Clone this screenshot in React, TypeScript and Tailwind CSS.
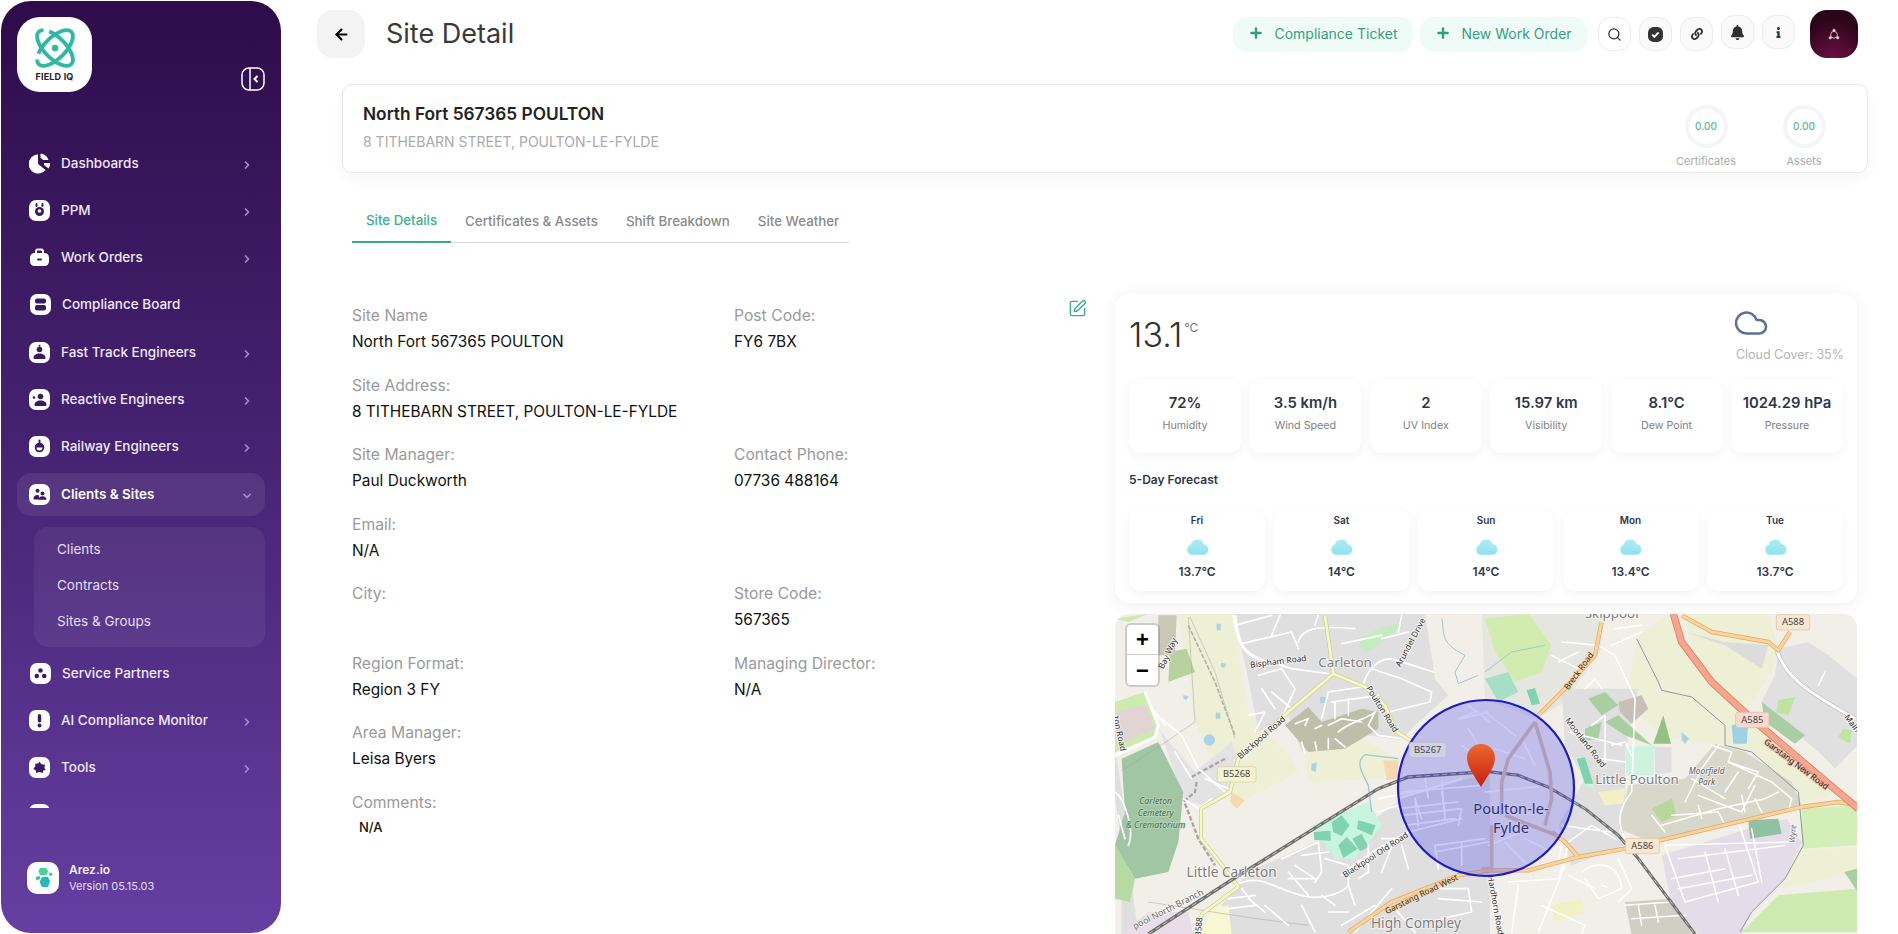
import type { ReactNode } from "react";
import { ChevronRight, ChevronDown, Plus, Search, Cloud, SquarePen, ArrowLeft } from "lucide-react";
import { FaBell, FaInfo, FaLink } from "react-icons/fa";

const Glyph = ({ children }: { children: ReactNode }) => (
  <svg viewBox="0 0 21 21" className="h-[21px] w-[21px] shrink-0">
    <rect x="0" y="0" width="21" height="21" rx="7" fill="#fff" />
    <g fill="#3a1a60">{children}</g>
  </svg>
);

const navIcons: Record<string, ReactNode> = {
  dashboards: (
    <svg viewBox="0 0 21 21" className="h-[21px] w-[21px] shrink-0">
      <path d="M9 1.500a9.500 9.500 0 1 0 7.500 15.500l-5.500-4.500a3 3 0 0 1-2-2.500z" fill="#fff" />
      <path d="M11.500 0.500a9.500 9.500 0 0 1 8 6.500h-5.500a3.500 3.500 0 0 0-2.500-2z" fill="#fff" />
      <path d="M15 10h6v1.500a9 9 0 0 1-1.500 4l-4.500-3.500z" fill="#fff" />
    </svg>
  ),
  ppm: (
    <Glyph>
      <circle cx="10.500" cy="11.500" r="4.500" />
      <rect x="6.500" y="3" width="2" height="4" rx="1" />
      <rect x="12.500" y="3" width="2" height="4" rx="1" />
      <circle cx="10.500" cy="11" r="1.800" fill="#fff" />
    </Glyph>
  ),
  work: (
    <svg viewBox="0 0 21 21" className="h-[21px] w-[21px] shrink-0">
      <path d="M7 6V4.500a2 2 0 0 1 2-2h3a2 2 0 0 1 2 2V6" fill="none" stroke="#fff" strokeWidth="2" />
      <rect x="1" y="6" width="19" height="13" rx="4.500" fill="#fff" />
      <rect x="8" y="11.500" width="5" height="2" rx="1" fill="#3a1a60" />
    </svg>
  ),
  compliance: (
    <Glyph>
      <rect x="5" y="4.500" width="11" height="5" rx="2" />
      <rect x="5" y="11" width="11" height="5.500" rx="2" />
    </Glyph>
  ),
  fast: (
    <Glyph>
      <circle cx="10.500" cy="7.500" r="2.800" />
      <rect x="9.500" y="2.800" width="2" height="2" rx="1" />
      <path d="M4.500 16c0-3 2.500-4.500 6-4.500s6 1.500 6 4.500c0 .5-.5 1-1 1h-10c-.5 0-1-.5-1-1z" />
    </Glyph>
  ),
  reactive: (
    <Glyph>
      <circle cx="11.500" cy="7.500" r="2.800" />
      <circle cx="5" cy="8.500" r="1.300" />
      <path d="M5.500 16c0-3 2.500-4.500 6-4.500s6 1.500 6 4.500c0 .5-.5 1-1 1h-10c-.5 0-1-.5-1-1z" />
    </Glyph>
  ),
  railway: (
    <Glyph>
      <circle cx="10.500" cy="11.500" r="4.800" />
      <rect x="9.500" y="3.500" width="2" height="4" rx="1" />
      <path d="M7.500 11.500a3 3 0 0 0 6 0z" fill="#fff" />
    </Glyph>
  ),
  clients: (
    <Glyph>
      <circle cx="8.500" cy="6.800" r="2" />
      <circle cx="13.500" cy="9.500" r="2" />
      <path d="M4.500 15c0-2.500 1.500-4 4-4 1 0 1.500.5 1.500 1v3.500H5z" />
      <path d="M9.500 15.800c0-2 1.500-3.500 4-3.500s4 1.500 4 3.500z" />
    </Glyph>
  ),
  partners: (
    <Glyph>
      <circle cx="10.500" cy="7.500" r="2.300" />
      <circle cx="6.800" cy="13" r="2.300" />
      <circle cx="14.200" cy="13" r="2.300" />
    </Glyph>
  ),
  ai: (
    <Glyph>
      <rect x="8.800" y="4" width="3.400" height="8.500" rx="1.700" />
      <circle cx="10.500" cy="15.500" r="1.900" />
    </Glyph>
  ),
  tools: (
    <Glyph>
      <path d="M10.500 4.800l2 2.500 3.500.4-.6 3.200 1.300 1.600-2.500 1.200-.4 2.400-3.300-1-3.300 1-.4-2.700-2.400-1.700 2-2.500-.3-2.500 3-.3z" />
    </Glyph>
  ),
  blank: <Glyph>{null}</Glyph>,
};

const NavItem = ({
  icon,
  label,
  chevron = true,
  indent = false,
}: {
  icon: string;
  label: string;
  chevron?: boolean;
  indent?: boolean;
}) => (
  <div className={`flex h-[47px] shrink-0 items-center ${indent ? "pl-[29px]" : "pl-[28px]"} pr-[28px]`}>
    {navIcons[icon]}
    <span className="ml-[11px] text-[13.500px] font-medium text-[#efe8f7]">{label}</span>
    {chevron && <ChevronRight size={12} strokeWidth={3.500} className="ml-auto mt-[3px] text-[#a48ccb]" />}
  </div>
);

const Sidebar = () => (
  <aside className="relative ml-px mt-px flex h-[932px] w-[280px] shrink-0 flex-col rounded-[30px] bg-gradient-to-b from-[#2e0c4a] via-[#472474] to-[#653fa2]">
    <div className="flex h-[138.500px] shrink-0 items-start justify-between pl-[16px] pr-[16px] pt-[16px]">
      <div className="flex h-[75px] w-[75px] flex-col items-center rounded-[23px] bg-white pt-[8px]">
        <svg viewBox="0 0 48 48" className="h-[46px] w-[46px]" fill="none" stroke="#2fb9a5" strokeWidth="4">
          <ellipse cx="24" cy="24" rx="24" ry="11" transform="rotate(45 24 24)" strokeDasharray="62 6" />
          <ellipse cx="24" cy="24" rx="24" ry="11" transform="rotate(-45 24 24)" strokeDasharray="62 6" />
          <circle cx="24" cy="24" r="3.500" fill="#2fb9a5" stroke="none" />
        </svg>
        <span className="mt-[1px] text-[9px] font-bold leading-[10px] tracking-[0.2px] text-[#222]">FIELD IQ</span>
      </div>
      <svg viewBox="0 0 24 24" className="mt-[50px] h-[24px] w-[24px]" fill="none" stroke="#fff" strokeWidth="1.500">
        <rect x="1" y="1" width="22" height="22" rx="7" />
        <path d="M9 1v22" />
        <path d="M16.500 9l-3 3 3 3" strokeWidth="2" />
      </svg>
    </div>
    <nav className="flex h-[668px] shrink-0 flex-col overflow-hidden">
      <NavItem icon="dashboards" label="Dashboards" />
      <NavItem icon="ppm" label="PPM" />
      <NavItem icon="work" label="Work Orders" />
      <div className="mt-[0.500px]" />
      <NavItem icon="compliance" label="Compliance Board" chevron={false} indent />
      <div className="mt-[1px]" />
      <NavItem icon="fast" label="Fast Track Engineers" />
      <NavItem icon="reactive" label="Reactive Engineers" />
      <NavItem icon="railway" label="Railway Engineers" />
      <div className="mx-[16px] mt-[2.500px] flex h-[43px] shrink-0 items-center rounded-[14px] bg-[#ffffff14] pl-[12px] pr-[12px]">
        {navIcons.clients}
        <span className="ml-[11px] text-[13.500px] font-semibold text-white">Clients &amp; Sites</span>
        <ChevronDown size={12} strokeWidth={3.500} className="ml-auto mt-[3px] text-[#a48ccb]" />
      </div>
      <div className="ml-[33px] mr-[16px] mt-[11px] shrink-0 rounded-[14px] bg-[#ffffff0f] pb-[7px] pl-[23px] pt-[5px]">
        {["Clients", "Contracts", "Sites & Groups"].map((s) => (
          <div key={s} className="flex h-[36px] items-center text-[13.500px] text-[#e6def0]">
            {s}
          </div>
        ))}
      </div>
      <div className="mt-[3.500px]" />
      <NavItem icon="partners" label="Service Partners" chevron={false} indent />
      <NavItem icon="ai" label="AI Compliance Monitor" />
      <NavItem icon="tools" label="Tools" />
      <NavItem icon="blank" label="" chevron={false} />
    </nav>
    <div className="mt-[54px] flex items-center pl-[26px]">
      <div className="flex h-[32px] w-[32px] items-center justify-center rounded-[10px] bg-white">
        <svg viewBox="0 0 24 24" className="h-[24px] w-[24px]">
          <path d="M9 2h6l2 3-1 4H9L7.500 5z" fill="#46d39a" />
          <path d="M18 6.500l3.500.5-.5 3-3-.5z" fill="#3fcfa8" />
          <path d="M4.500 11l4-1 1 2.500-4 2z" fill="#2fc4b0" />
          <path d="M11 11h6l2 4-2 6H11l-2.500-5z" fill="#1fbcb2" />
        </svg>
      </div>
      <div className="ml-[10px]">
        <div className="text-[12px] font-semibold leading-[16px] text-[#f3eef8]">Arez.io</div>
        <div className="text-[11px] leading-[16px] text-[#e6def0]">Version 05.15.03</div>
      </div>
    </div>
  </aside>
);

const IconBtn = ({ children, white = false, up = false }: { children: ReactNode; white?: boolean; up?: boolean }) => (
  <button
    className={`flex h-[34px] w-[33px] items-center justify-center rounded-[13px] border border-[#ececec] ${
      white ? "bg-white" : "bg-[#fafafa]"
    } ${up ? "-mt-[2px]" : ""} text-[#2f2f2f]`}
  >
    {children}
  </button>
);

const ActionBtn = ({ label, width }: { label: string; width: string }) => (
  <button className={`flex h-[35px] items-center justify-center gap-[10px] rounded-[14px] bg-[#effbf6] pb-[3px] text-[14px] text-[#3a9d80] ${width}`}>
    <Plus size={16} strokeWidth={3.500} className="text-[#2f9e7f]" />
    {label}
  </button>
);

const Header = () => (
  <header className="flex h-[58px] items-start pr-[40px] pt-[10px]">
    <button className="flex h-[48px] w-[48px] items-center justify-center rounded-[16px] bg-[#f3f3f3] text-black">
      <ArrowLeft size={17} strokeWidth={3} />
    </button>
    <h1 className="ml-[21px] mt-[8px] text-[27px] font-normal leading-[32px] text-[#3a3a3a]">Site Detail</h1>
    <div className="ml-auto flex items-start pt-[7px]">
      <ActionBtn label="Compliance Ticket" width="w-[180px]" />
      <div className="w-[7px]" />
      <ActionBtn label="New Work Order" width="w-[167px]" />
      <div className="flex items-start gap-[8px] pl-[11px]">
        <IconBtn white>
          <Search size={15} />
        </IconBtn>
        <IconBtn>
          <svg viewBox="0 0 16 16" className="h-[15px] w-[15px]">
            <rect width="16" height="16" rx="6" fill="#333" />
            <path d="M4.500 8.200l2.300 2.300 4.500-4.800" fill="none" stroke="#fff" strokeWidth="2" />
          </svg>
        </IconBtn>
        <IconBtn>
          <FaLink size={12} />
        </IconBtn>
        <IconBtn up>
          <FaBell size={15} />
        </IconBtn>
        <IconBtn up>
          <FaInfo size={11} className="text-[#22404f]" />
        </IconBtn>
      </div>
    </div>
    <div className="ml-[15px] flex h-[48px] w-[48px] items-center justify-center rounded-[17px] bg-[radial-gradient(circle_at_50%_100%,#6b0f45,#2b0519_72%)]">
      <svg viewBox="0 0 16 16" className="h-[12px] w-[12px]" fill="none" stroke="#e9c9d8" strokeWidth="1.200">
        <circle cx="8" cy="9" r="4.500" />
        <circle cx="8" cy="3" r="1.500" fill="#e9c9d8" />
        <circle cx="3" cy="13" r="1.500" fill="#e9c9d8" />
        <circle cx="13" cy="13" r="1.500" fill="#e9c9d8" />
      </svg>
    </div>
  </header>
);

const Stat = ({ label }: { label: string }) => (
  <div className="flex w-[98px] flex-col items-center">
    <div className="flex h-[43px] w-[43px] items-center justify-center rounded-full border-[4px] border-[#f4f6f5] text-[10px] font-medium text-[#5cb89a]">
      0.00
    </div>
    <div className="mt-[6px] text-[11px] leading-[14px] text-[#aaaaaa]">{label}</div>
  </div>
);

const SiteCard = () => (
  <section className="ml-[25px] mt-[26px] flex h-[89px] w-[1526px] items-start justify-between rounded-[10px] border border-[#e8e8e8] bg-white pl-[20px] pr-[14px] shadow-[0_6px_14px_rgba(0,0,0,0.04)]">
    <div className="pt-[18px]">
      <div className="text-[17.300px] font-semibold leading-[22px] text-[#222]">North Fort 567365 POULTON</div>
      <div className="mt-[7px] text-[14px] leading-[20px] text-[#aaaaaa]">8 TITHEBARN STREET, POULTON-LE-FYLDE</div>
    </div>
    <div className="flex pt-[20px]">
      <Stat label="Certificates" />
      <Stat label="Assets" />
    </div>
  </section>
);

const tabs = ["Site Details", "Certificates & Assets", "Shift Breakdown", "Site Weather"];

const Tabs = () => (
  <div className="ml-[35px] mt-[27px] flex h-[43px] w-[497px] border-b border-[#d9d9d9]">
    {tabs.map((t, i) => (
      <div
        key={t}
        className={`-mb-px flex h-[43px] shrink-0 items-center whitespace-nowrap px-[14px] text-[13.300px] font-medium ${
          i === 0 ? "border-b-2 border-[#3aa886] text-[#3eaf8d]" : "text-[#8a8a8a]"
        }`}
      >
        {t}
      </div>
    ))}
  </div>
);

const Field = ({ label, value, small = false }: { label: string; value?: string; small?: boolean }) => (
  <div>
    <div className="text-[15.700px] leading-[24px] text-[#9a9a9a]">{label}</div>
    {value &&
      (small ? (
        <div className="ml-[7px] mt-[2px] text-[13px] font-medium leading-[20px] text-[#111]">{value}</div>
      ) : (
        <div className="mt-[4px] text-[15.400px] leading-[20px] text-[#111]">{value}</div>
      ))}
  </div>
);

const Details = () => (
  <div className="flex w-[798px] shrink-0 pl-[35px] pt-[61px]">
    <div className="grid w-[716px] auto-rows-[69.500px] grid-cols-[382px_1fr]">
      <Field label="Site Name" value="North Fort 567365 POULTON" />
      <Field label="Post Code:" value="FY6 7BX" />
      <div className="col-span-2">
        <Field label="Site Address:" value="8 TITHEBARN STREET, POULTON-LE-FYLDE" />
      </div>
      <Field label="Site Manager:" value="Paul Duckworth" />
      <Field label="Contact Phone:" value="07736 488164" />
      <div className="col-span-2">
        <Field label="Email:" value="N/A" />
      </div>
      <Field label="City:" />
      <Field label="Store Code:" value="567365" />
      <Field label="Region Format:" value="Region 3 FY" />
      <Field label="Managing Director:" value="N/A" />
      <div className="col-span-2">
        <Field label="Area Manager:" value="Leisa Byers" />
      </div>
      <Field label="Comments:" value="N/A" small />
    </div>
    <SquarePen size={19} strokeWidth={1.800} className="-mt-[5px] text-[#3aaf8f]" />
  </div>
);

const metrics = [
  ["72%", "Humidity"],
  ["3.5 km/h", "Wind Speed"],
  ["2", "UV Index"],
  ["15.97 km", "Visibility"],
  ["8.1°C", "Dew Point"],
  ["1024.29 hPa", "Pressure"],
];

const forecast = [
  ["Fri", "13.7°C"],
  ["Sat", "14°C"],
  ["Sun", "14°C"],
  ["Mon", "13.4°C"],
  ["Tue", "13.7°C"],
];

const Weather = () => (
  <section className="h-[309px] rounded-[14px] bg-white px-[14px] shadow-[0_2px_16px_rgba(0,0,0,0.07)]">
    <div className="flex h-[86px] items-start justify-between">
      <div className="mt-[24px] flex items-start">
        <span className="text-[34px] font-light leading-[34px] text-[#333]">13.1</span>
        <span className="ml-[2px] mt-[3px] text-[12px] leading-[14px] text-[#777]">°C</span>
      </div>
      <div className="mr-[-1px] mt-[11px]">
        <Cloud size={36} strokeWidth={1.700} className="-ml-[3px] text-[#5b7099]" />
        <div className="mt-[5px] text-[12.500px] leading-[18px] text-[#b5b5b5]">Cloud Cover: 35%</div>
      </div>
    </div>
    <div className="flex justify-between">
      {metrics.map(([v, l]) => (
        <div key={l} className="flex h-[73px] w-[112px] flex-col items-center rounded-[12px] bg-white pt-[14px] shadow-[0_3px_10px_rgba(0,0,0,0.05)]">
          <div className="text-[14.800px] font-semibold leading-[18px] text-[#2d3748]">{v}</div>
          <div className="mt-[7px] text-[10.700px] leading-[14px] text-[#808080]">{l}</div>
        </div>
      ))}
    </div>
    <div className="mt-[19px] text-[12px] font-semibold leading-[16px] text-[#2d3748]">5-Day Forecast</div>
    <div className="mt-[21px] flex justify-between">
      {forecast.map(([d, t]) => (
        <div key={d} className="flex h-[82px] w-[136px] flex-col items-center rounded-[12px] bg-white pt-[5px] shadow-[0_3px_10px_rgba(0,0,0,0.05)]">
          <div className="text-[10px] font-semibold leading-[12px] text-[#2d3748]">{d}</div>
          <svg viewBox="0 0 22 16" className="mt-[12px] h-[17px] w-[23px]">
            <defs>
              <linearGradient id="drop" x1="0" y1="0" x2="0" y2="1">
                <stop offset="0" stopColor="#a9edf4" />
                <stop offset="1" stopColor="#8fe3ee" />
              </linearGradient>
            </defs>
            <path d="M6 16a5 5 0 0 1-1.500-9.700A6.500 6.500 0 0 1 17 5.800 5.200 5.200 0 0 1 17 16z" fill="url(#drop)" />
          </svg>
          <div className="mt-[9px] text-[12px] font-semibold leading-[16px] text-[#2d3748]">{t}</div>
        </div>
      ))}
    </div>
  </section>
);

const Label = ({
  x,
  y,
  size = 25,
  rot = 0,
  color = "#2a2a2a",
  italic = false,
  halo = "#ffffff",
  children,
}: {
  x: number;
  y: number;
  size?: number;
  rot?: number;
  color?: string;
  italic?: boolean;
  halo?: string;
  children: string;
}) => (
  <text
    x={x}
    y={y}
    fontSize={size}
    fill={color}
    fontFamily="'Noto Sans', sans-serif"
    fontStyle={italic ? "italic" : "normal"}
    textAnchor="middle"
    dominantBaseline="middle"
    stroke={halo}
    strokeOpacity={0.75}
    strokeWidth={5}
    paintOrder="stroke"
    transform={rot ? `rotate(${rot} ${x} ${y})` : undefined}
  >
    {children}
  </text>
);

const Shield = ({ x, y, w = 116, fill, stroke, children }: { x: number; y: number; w?: number; fill: string; stroke: string; children: string }) => (
  <g>
    <rect x={x - w / 2} y={y - 23} width={w} height={46} rx={7} fill={fill} stroke={stroke} strokeWidth={2} />
    <text x={x} y={y + 1} fontSize={28} fill="#444" fontFamily="'Noto Sans', sans-serif" textAnchor="middle" dominantBaseline="middle">
      {children}
    </text>
  </g>
);

// street lines, in the coordinates of a 3x crop of each half of the map
const leftStreets = [
  "M355 10C370 110 395 125 430 140L530 170L640 185",
  "M360 40L470 10M380 95L530 60M470 70L495 10M530 60L550 110M550 90C560 50 600 40 720 50M600 40L610 10M680 95L800 70",
  "M745 215C760 170 790 140 830 140L955 180M770 170L860 200L950 240L945 270L820 300M800 80L880 60M850 60L860 10",
  "M430 190L500 170L540 230L500 320M440 230L480 290M400 310L450 300L420 360M470 240L530 290",
  "M640 240L740 225M650 270L790 250M620 320L640 240M660 270L660 320M700 260L700 310",
  "M540 335L580 320L570 340M600 350L620 340M640 340L680 320L740 330M560 390L570 425M600 390L605 415M640 380L640 410M660 380L690 405M670 360C700 330 760 320 780 300L760 340L790 370L860 380",
  "M360 820C440 780 470 830 560 850C600 865 680 850 700 820L720 880M400 860L450 900M380 830L420 880L340 890M340 860L420 850",
  "M680 790C700 770 760 720 880 660L1000 630L1040 620",
  "M500 740L610 690L620 780L600 810M540 760L600 800L520 800M630 740L700 760L700 820M760 700L760 780L730 800M800 680L840 680L800 780M860 700L880 770",
  "M720 960L830 830M840 890L900 960M960 830L1060 830L1070 900L980 920M970 860L1100 870",
  "M0 430L120 375L130 340L90 240M140 320L200 370L250 470L330 540M150 340L120 300M180 420L230 500",
  "M0 540C30 560 60 660 40 700M10 610L30 680M205 560L250 590L290 560M270 500L340 530",
  "M790 560L890 540M790 600L850 580M850 560L1040 500M860 610L1040 590L1030 640M900 560L920 620M980 540L990 600M1060 350L1090 400M1040 320L1120 300M960 720L1120 690",
  "M860 540L1100 520M850 590L1030 570M870 640L1020 620M930 500L940 560M980 510L990 620M900 560L910 640M1040 400L1125 460M1060 280L1125 330M1030 320L1080 300M960 700L1110 680M960 700L970 770M1040 690L1040 760",
  "M560 730L640 720M520 780L580 850M620 850L660 880M450 880L520 940M560 880L600 960M640 900L700 900M680 940L780 880",
];

const rightStreets = [
  "M0 540L200 520M230 90L340 100L390 130L450 260L440 540C400 590 395 630 420 680M380 100L470 60M390 50L470 40",
  "M200 130L280 170M220 150L280 120M250 360L410 400M300 230L330 200L350 230M320 340L360 310L360 450M380 400L420 390L440 430M350 440L420 450",
  "M230 640L300 650L380 660M250 690L320 640L390 680M220 750L230 700M70 810L220 800L250 700M290 780C320 750 400 740 410 830L340 860L300 800M350 820L365 825",
  "M400 740L440 830L400 870M250 790L330 830M100 820L80 960M160 960L240 760M170 880L300 940L290 966",
  "M680 400L740 420L730 450L860 510L920 560L910 600M700 400L650 470L600 570M730 450L820 480L790 530M620 500L720 560M760 480L720 540M640 550L770 600L810 520",
  "M530 640L700 590L840 560L880 540M560 610L700 600L720 640M500 610L540 660M640 580L650 620M770 550L780 600M810 560L830 600",
  "M540 700L910 690M580 740L900 700M600 870L820 810L760 630M660 720L700 870M720 710L760 850M800 650L830 810M540 700L600 870M560 800L720 770M580 830L800 790",
  "M420 880L560 870M440 920L600 910M460 880L470 940M510 880L520 930",
  "M875 115C900 190 950 230 1110 320M1020 180L1000 220",
  "M0 300L90 370M30 410L120 440M110 380L150 460M10 700L110 660M60 690L130 760M120 680L200 720",
];

const MapPane = () => (
  <div className="relative mt-[11px] h-[320px] overflow-hidden rounded-t-[14px] bg-[#f2efe9]">
    <svg viewBox="0 0 742 320" className="block h-[320px] w-[742px]">
      <g transform="translate(0,-2) scale(0.33333)">
        <path d="M190 5H350L400 300L520 430L550 480L380 570L300 480L240 330z" fill="#eef0d5" />
        <path d="M560 400L740 380L850 440L800 500L580 510z" fill="#eef0d5" />
        <path d="M355 5H930L960 200L1000 250L900 340L860 385L760 370L560 420L520 310L430 360L400 200z" fill="#dfdfdf" />
        <path d="M400 780L600 690L780 620L860 560L1125 480V966H340L320 880z" fill="#dfdfdf" />
        <path d="M90 240L130 350L240 480L350 390L370 450L330 560L260 580L205 560L130 340z" fill="#e4e3e3" />
        <path d="M0 410V560L20 700V966H70L50 820L20 700L30 600z" fill="#dfdfdf" />
        <path d="M0 270L60 250L90 240L130 340L120 375L0 420z" fill="#cdebb0" />
        <path d="M0 300L90 280L120 350L30 390L0 380z" fill="#e2d4d4" />
        <path d="M20 440L130 390L205 540L190 690L160 780L60 800L0 700L30 600z" fill="#a0c6a3" />
        <path d="M0 700L60 800L45 870L0 860z" fill="#b7d9a2" />
        <path d="M165 120L215 110L240 180L160 210z" fill="#b7d29c" />
        <path d="M130 10H185L180 130H130z" fill="#c8c8b4" />
        <path d="M0 20L100 5L40 30z" fill="#cdebb0" />
        <path d="M20 966L100 900L220 900L235 966z" fill="#e8dde8" />
        <path d="M290 890L340 880L350 966H260z" fill="#f7f7d0" />
        <path d="M510 340L580 285L620 330L740 290L790 300L790 350L690 410L580 420z" fill="#bdbfa8" />
        <path d="M590 640L760 570L800 640L720 740L660 740z" fill="#c8f5df" />
        <path d="M596 660L646 656L648 686L598 684zM650 630L680 610L704 640L680 672L655 660zM730 625L782 640L770 670L726 650zM670 700L695 675L728 710L685 738zM712 680L740 665L760 705L735 718z" fill="#7fd3ae" />
        <path d="M730 80L790 50L870 30L800 90L750 125z" fill="#c5ecc0" />
        <path d="M350 540L390 565L365 590L345 570zM805 445H850V500L815 505z" fill="#f6d9ae" />
        <circle cx="283" cy="384" r="17" fill="#a8d4e8" />
        <path d="M305 35h12v20h-12zM318 152l16 4-6 12-10-4zM205 250l16 2-6 12-10-4zM302 302h14v18h-14zM590 455l16-4-4 28-14-4zM615 255h20v18h-20z" fill="#a8d4e8" />
        <path d="M750 428C720 450 740 480 760 520L770 600M750 428L850 440" fill="none" stroke="#9dc6d4" strokeWidth="4" />
        <path d="M980 20C990 60 970 90 1050 130L1020 180L1030 215L1090 190" fill="none" stroke="#9dc6d4" strokeWidth="3" />
        <path d="M220 15L240 330L145 395L20 475M225 15L300 180L360 380M100 870L410 918L580 940" fill="none" stroke="#a2a2a2" strokeWidth="1.500" />
        <path d="M230 495L330 440M245 510L240 540L205 570M210 575L250 680L300 760" fill="none" stroke="#aaa3a8" strokeWidth="7" strokeDasharray="14 6" />
        <path d="M220 40L300 210L360 370" fill="none" stroke="#b6b0a8" strokeWidth="5" strokeDasharray="14 5" />
        <g fill="none" stroke="#fff" strokeWidth="5" strokeLinecap="round" strokeLinejoin="round">
          {leftStreets.map((d) => (
            <path key={d} d={d} />
          ))}
        </g>
        <path d="M360 10C370 110 395 125 430 140" fill="none" stroke="#fff" strokeWidth="9" />
        <path d="M0 430L120 375L130 340L90 240" fill="none" stroke="#fff" strokeWidth="9" />
        <path d="M700 960L830 870L1030 790L1125 775" fill="none" stroke="#dea968" strokeWidth="13" />
        <path d="M700 960L830 870L1030 790L1125 775" fill="none" stroke="#fad29a" strokeWidth="9" />
        <g fill="none" strokeLinejoin="round">
          <path d="M240 966L262 905L370 825L330 770L258 680L258 590L345 540L370 440L520 300L655 185L750 225L810 280L845 360L895 390M630 10L655 185" stroke="#c9cb96" strokeWidth="12" />
          <path d="M240 966L262 905L370 825L330 770L258 680L258 590L345 540L370 440L520 300L655 185L750 225L810 280L845 360L895 390M630 10L655 185" stroke="#f7fabf" strokeWidth="8" />
        </g>
        <path d="M100 966L340 810L790 530L880 495L1125 478" fill="none" stroke="#6f6f6f" strokeWidth="10" />
        <path d="M100 966L340 810L790 530L880 495L1125 478" fill="none" stroke="#d9d9d9" strokeWidth="2.500" strokeDasharray="16 10" />
        <Label x={690} y={155} size={40} color="#7c7c7c">Carleton</Label>
        <Label x={350} y={785} size={41} color="#7c7c7c">Little Carleton</Label>
        <Label x={903} y={938} size={41} color="#7c7c7c">High Compley</Label>
        <Label x={490} y={150} rot={-7}>Bispham Road</Label>
        <Label x={888} y={92} rot={-62}>Arundel Drive</Label>
        <Label x={800} y={292} rot={58}>Poulton Road</Label>
        <Label x={440} y={378} rot={-41}>Blackpool Road</Label>
        <Label x={782} y={730} rot={-33}>Blackpool Old Road</Label>
        <Label x={920} y={848} rot={-26} halo="#fad29a">Garstang Road West</Label>
        <Label x={122} y={568} size={26} italic color="#3d6b50" halo="#c4dcc4">Carleton</Label>
        <Label x={122} y={604} size={26} italic color="#3d6b50" halo="#c4dcc4">Cemetery</Label>
        <Label x={122} y={640} size={26} italic color="#3d6b50" halo="#c4dcc4">&amp; Crematorium</Label>
        <Label x={160} y={125} rot={-65}>Bay Way</Label>
        <Label x={12} y={365} rot={78}>ton Road</Label>
        <Label x={160} y={893} size={27} rot={-27} color="#666">pool North Branch</Label>
        <Label x={253} y={945} rot={-85}>B588</Label>
        <Shield x={365} y={487} fill="#f6f3cf" stroke="#cfcca6">B5268</Shield>
      </g>
      <g transform="translate(370,-2) scale(0.33333)">
        <path d="M-10 5H340L350 110L240 270L150 320L0 260z" fill="#e6e6e0" />
        <path d="M0 20L130 5L200 100L170 180L90 210L30 120z" fill="#d2ecb0" />
        <path d="M0 200L70 180L100 240L40 270z" fill="#a5dfc4" />
        <path d="M125 235L150 228L165 275L140 280z" fill="#7fd3ae" />
        <path d="M460 70L555 5L600 100L700 220L820 330L1060 540L950 585L930 530L800 420L720 400L560 380L520 360L420 270z" fill="#eef0d5" />
        <path d="M880 110L970 90L1030 130L1118 200V400L1050 470L1000 420L830 270L870 190z" fill="#e0e0e0" />
        <path d="M830 270L960 370L930 395L840 330z" fill="#a8cfa4" />
        <path d="M590 5H850L880 110L860 180L780 300L640 170z" fill="#eef0d5" />
        <path d="M600 60L720 90L850 100L830 170L720 100z" fill="#dcdcdc" />
        <path d="M740 340L790 330L785 395L745 395z" fill="#9cd2e6" />
        <path d="M590 360L612 380L600 395L590 385z" fill="#a8d4e8" />
        <path d="M1075 350L1100 355L1095 395L1060 375zM880 265L930 255L910 310L875 300z" fill="#c0e3a0" />
        <path d="M230 230H460L420 420V560L400 650L420 700L260 760L220 640L300 500L240 400z" fill="#dfdfdf" />
        <path d="M310 260L360 240L400 280L350 310zM300 350L350 330L340 380L300 385zM360 330L400 310L500 400L420 370z" fill="#a8cfa0" />
        <path d="M400 270L470 250L490 290L440 335L405 300z" fill="#c9bfb6" />
        <path d="M505 395L535 310L558 395z" fill="#93c283" />
        <path d="M420 405L510 400L505 490L425 490zM270 435L300 435L330 530L300 520z" fill="#cdf3df" />
        <path d="M510 405H560V480L510 490z" fill="#dfdfdf" />
        <path d="M275 440L300 436L325 515L300 515z" fill="#7fd3ae" />
        <path d="M340 540L420 530L415 575L360 580z" fill="#f3f1c4" />
        <path d="M430 520L600 500L690 395L780 420L920 510L950 580L780 620L500 690L400 650z" fill="#d7d7ca" />
        <path d="M500 590L560 560L575 610L530 630z" fill="#b7d89a" />
        <path d="M530 730L790 650L905 620L950 690L900 800L800 900L770 966H640L560 880z" fill="#e4dce8" />
        <path d="M790 625L880 620L890 665L795 680z" fill="#8fc2a0" />
        <path d="M950 590L1118 580V700L950 710z" fill="#d4eeb8" />
        <path d="M940 715L1118 705V780L890 830z" fill="#eef0d5" />
        <path d="M770 960L880 850L1118 830V960z" fill="#cdebb0" />
        <path d="M1078 780L1118 770V840z" fill="#a8cfa0" />
        <path d="M420 870L560 860L620 966H440z" fill="#cfcfc4" />
        <path d="M200 880L290 860L300 900L210 930z" fill="#f3f1c4" />
        <path d="M455 80L520 210L530 235L620 255L720 340L720 400L800 420L940 540L955 700L900 800L800 900L765 960" fill="none" stroke="#8c97a6" strokeWidth="3" />
        <path d="M0 180L80 120L180 100" fill="none" stroke="#9dc6d4" strokeWidth="3" />
        <g fill="none" stroke="#fff" strokeWidth="4.500" strokeLinecap="round" strokeLinejoin="round">
          {rightStreets.map((d) => (
            <path key={d} d={d} />
          ))}
        </g>
        <path d="M875 115C900 190 950 230 1110 320" fill="none" stroke="#bbb" strokeWidth="13" />
        <path d="M875 115C900 190 950 230 1110 320" fill="none" stroke="#fff" strokeWidth="9" />
        <g fill="none" strokeLinejoin="round" stroke="#dea968" strokeWidth="13">
          <path d="M-10 775H130L280 735L420 710L800 620L950 585L1060 570L1118 580" />
          <path d="M160 310L230 240L330 130L350 30M280 735L240 690L200 660M590 10L680 60L850 90L880 115L915 60" />
        </g>
        <g fill="none" strokeLinejoin="round" stroke="#fad29a" strokeWidth="9">
          <path d="M-10 775H130L280 735L420 710L800 620L950 585L1060 570L1118 580" />
          <path d="M160 310L230 240L330 130L350 30M280 735L240 690L200 660M590 10L680 60L850 90L880 115L915 60" />
        </g>
        <path d="M565 5L590 90L680 210L800 320L1060 540L1120 590" fill="none" stroke="#d87f63" strokeWidth="22" />
        <path d="M565 5L590 90L680 210L800 320L1060 540L1120 590" fill="none" stroke="#f7a58c" strokeWidth="17" />
        <path d="M0 478L100 490L190 525L300 590L400 670L460 740L630 966" fill="none" stroke="#6f6f6f" strokeWidth="9" />
        <path d="M0 478L100 490L190 525L300 590L400 670L460 740L630 966" fill="none" stroke="#d9d9d9" strokeWidth="2.500" strokeDasharray="16 10" />
        <path d="M150 330L70 440L50 510L50 610M150 330L195 480L200 560L180 640M60 610L215 670M20 640L20 770H-10" fill="none" stroke="#dcc0a8" strokeWidth="11" />
        <Label x={380} y={8} size={40} color="#7c7c7c">Skippool</Label>
        <Label x={283} y={178} rot={-54} halo="#fad29a">Breck Road</Label>
        <Label x={300} y={393} rot={52}>Moorland Road</Label>
        <Label x={456} y={506} size={40} color="#7c7c7c">Little Poulton</Label>
        <Label x={665} y={480} italic color="#555">Moorfield</Label>
        <Label x={665} y={513} italic color="#555">Park</Label>
        <Label x={925} y={665} rot={-85} italic color="#777">Wyre</Label>
        <Label x={1100} y={335} rot={52}>Main</Label>
        <Label x={30} y={880} rot={80}>Hardhorn Road</Label>
        <Label x={933} y={458} rot={37} halo="#f7a58c">Garstang New Road</Label>
        <Label x={78} y={594} size={44} color="#2c3140" halo="#ffffff">Poulton-le-</Label>
        <Label x={78} y={652} size={44} color="#2c3140" halo="#ffffff">Fylde</Label>
        <Shield x={924} y={31} w={100} fill="#f8e6cf" stroke="#dcc19e">A588</Shield>
        <Shield x={802} y={324} w={100} fill="#f9d9cd" stroke="#e0b5a6">A585</Shield>
        <Shield x={472} y={702} w={102} fill="#f8e6cf" stroke="#dcc19e">A586</Shield>
      </g>
      <circle cx="371" cy="174" r="88" fill="#3030ee" fillOpacity="0.25" stroke="#1c1cc4" strokeWidth="2.200" />
      <g transform="translate(0,-2) scale(0.33333)">
        <Shield x={938} y={414} w={112} fill="#d0d1e2" stroke="#b5b6c8">B5267</Shield>
      </g>
      <defs>
        <linearGradient id="pin" x1="0" y1="0" x2="0" y2="1">
          <stop offset="0" stopColor="#ea6a2e" />
          <stop offset="1" stopColor="#c91c10" />
        </linearGradient>
      </defs>
      <path d="M366 173C358 160 352 152 352 144A14 14 0 0 1 380 144C380 152 374 160 366 173z" fill="url(#pin)" />
    </svg>
    <div className="absolute left-[12px] top-[11px] w-[31px] overflow-hidden rounded-[4px] bg-white font-['Liberation_Sans',sans-serif] text-[22px] font-bold text-black shadow-[0_0_0_2px_rgba(0,0,0,0.15)]">
      <div className="flex h-[30px] items-center justify-center border-b border-[#ccc]">+</div>
      <div className="flex h-[30px] items-center justify-center">−</div>
    </div>
  </div>
);

export default function App() {
  return (
    <div className="flex h-[934px] w-[1898px] overflow-hidden bg-white font-['Inter',sans-serif]">
      <Sidebar />
      <main className="min-w-0 flex-1 pl-[36px]">
        <Header />
        <SiteCard />
        <Tabs />
        <div className="flex items-start">
          <Details />
          <div className="mt-[51px] w-[742px] shrink-0">
            <Weather />
            <MapPane />
          </div>
        </div>
      </main>
    </div>
  );
}
